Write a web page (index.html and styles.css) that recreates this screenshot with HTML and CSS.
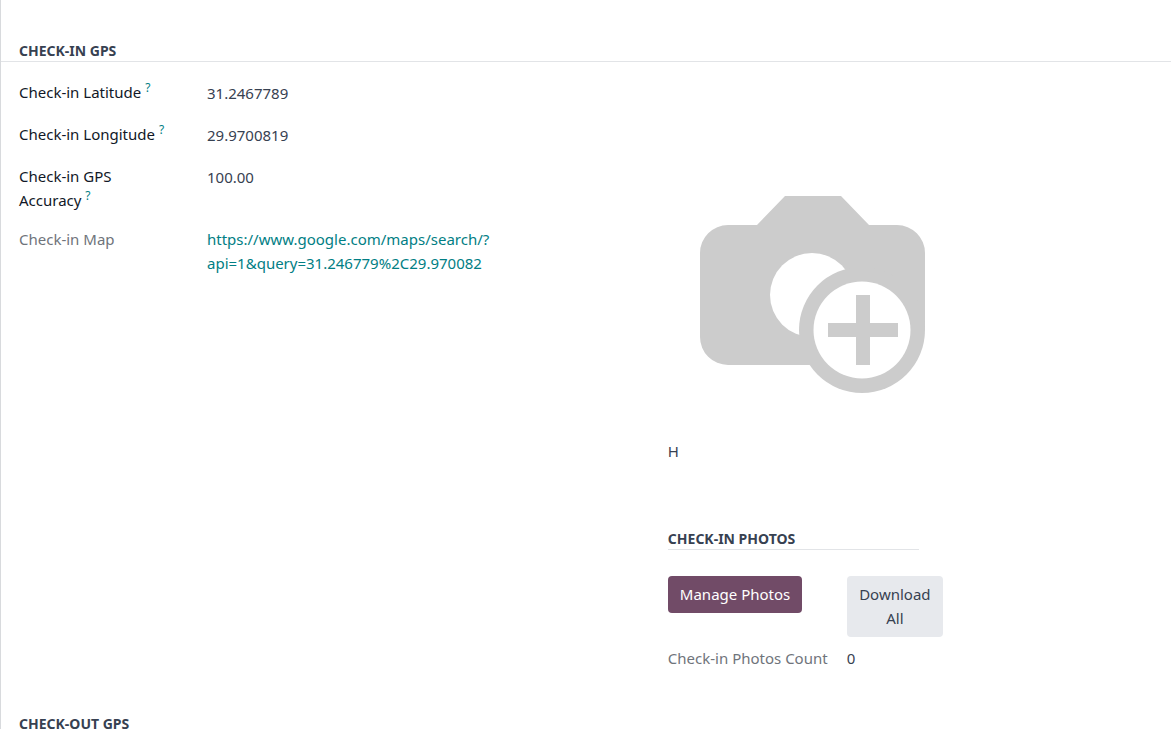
FILE: index.html
```html
<!DOCTYPE html>
<html lang="en">
<head>
    <meta charset="utf-8">
    <title>Check-in</title>
    <link rel="stylesheet" href="styles.css">
</head>
<body>
    <main class="sheet">
        <h2 class="section-title">Check-in GPS</h2>
        <div class="columns">
            <dl class="fields">
                <dt>Check-in Latitude <sup>?</sup></dt>
                <dd>31.2467789</dd>
                <dt>Check-in Longitude <sup>?</sup></dt>
                <dd>29.9700819</dd>
                <dt>Check-in GPS Accuracy <sup>?</sup></dt>
                <dd>100.00</dd>
                <dt class="readonly">Check-in Map</dt>
                <dd class="map"><a href="https://www.google.com/maps/search/?api=1&amp;query=31.246779%2C29.970082">https://www.google.com/maps/search/?<wbr>api=1&amp;query=31.246779%2C29.970082</a></dd>
            </dl>

            <div class="media">
                <svg class="placeholder" viewBox="0 0 226 198" role="img" aria-label="Add photo">
                    <path fill="#ccc" d="M57 29 85 0h56l28 29h28a28 28 0 0 1 28 28v84a28 28 0 0 1-28 28H28a28 28 0 0 1-28-28V57a28 28 0 0 1 28-28z"/>
                    <circle cx="112" cy="99" r="42" fill="#fff"/>
                    <!-- corner of the body hidden behind the ring -->
                    <path fill="#fff" d="M162 134h64v64h-64z"/>
                    <circle cx="162" cy="134" r="63" fill="#ccc"/>
                    <circle cx="162" cy="134" r="48.500" fill="#fff"/>
                    <path fill="#ccc" d="M156 99h14v28h28v14h-28v28h-14v-28h-28v-14h28z"/>
                </svg>
                <p class="note">H</p>

                <section class="photos">
                    <h2 class="photos-title">Check-in Photos</h2>
                    <div class="photos-grid">
                        <button type="button" class="btn primary">Manage Photos</button>
                        <button type="button" class="btn secondary">Download All</button>
                        <span class="readonly">Check-in Photos Count</span>
                        <span>0</span>
                    </div>
                </section>
            </div>
        </div>
        <h2 class="section-title">Check-out GPS</h2>
    </main>
</body>
</html>
```

FILE: styles.css
```css
* {
    box-sizing: border-box;
}

body {
    margin: 0;
    background-color: #fff;
    color: #374151;
    font-family: "Noto Sans", "Open Sans", sans-serif;
    font-size: 15px;
    line-height: 24px;
}

.sheet {
    height: 100vh;
    overflow: hidden;
    padding-top: 41px;
    border-left: 1px solid #d8dadd;
}

h2 {
    margin: 0;
    font-size: 14px;
    font-weight: 700;
    line-height: 20px;
    text-transform: uppercase;
    border-bottom: 1px solid #e2e4e7;
}

.section-title {
    padding-left: 18px;
}

.columns {
    display: grid;
    grid-template-columns: 4fr 3fr;
    column-gap: 2px;
    padding: 18px 18px 0;
    margin-bottom: 44px;
}

.fields {
    display: grid;
    grid-template-columns: 148px 300px;
    column-gap: 40px;
    row-gap: 15px;
    align-content: start;
    margin: 0;
}

dt {
    color: #111827;
}

dd {
    margin: 0;
    padding: 1px 0 2px;
}

.map {
    padding: 0;
}

sup {
    color: #017e84;
    font-size: 12px;
    line-height: 0;
}

.readonly {
    color: #6f747b;
}

a {
    color: #017e84;
    text-decoration: none;
}

.placeholder {
    display: block;
    width: 226px;
    margin: 116px 0 45px 32px;
}

.note {
    margin: 0 0 66px;
}

.photos-title {
    max-width: 251px;
}

.photos-grid {
    display: grid;
    grid-template-columns: 163px 96px;
    gap: 9px 16px;
    align-items: start;
    justify-content: start;
    padding-top: 26px;
}

.btn {
    padding: 6px 12px 7px;
    border: none;
    border-radius: 4px;
    font: inherit;
    cursor: pointer;
}

.primary {
    justify-self: start;
    background-color: #714b67;
    color: #fff;
}

.secondary {
    background-color: #e7e9ed;
    color: #374151;
}
```
